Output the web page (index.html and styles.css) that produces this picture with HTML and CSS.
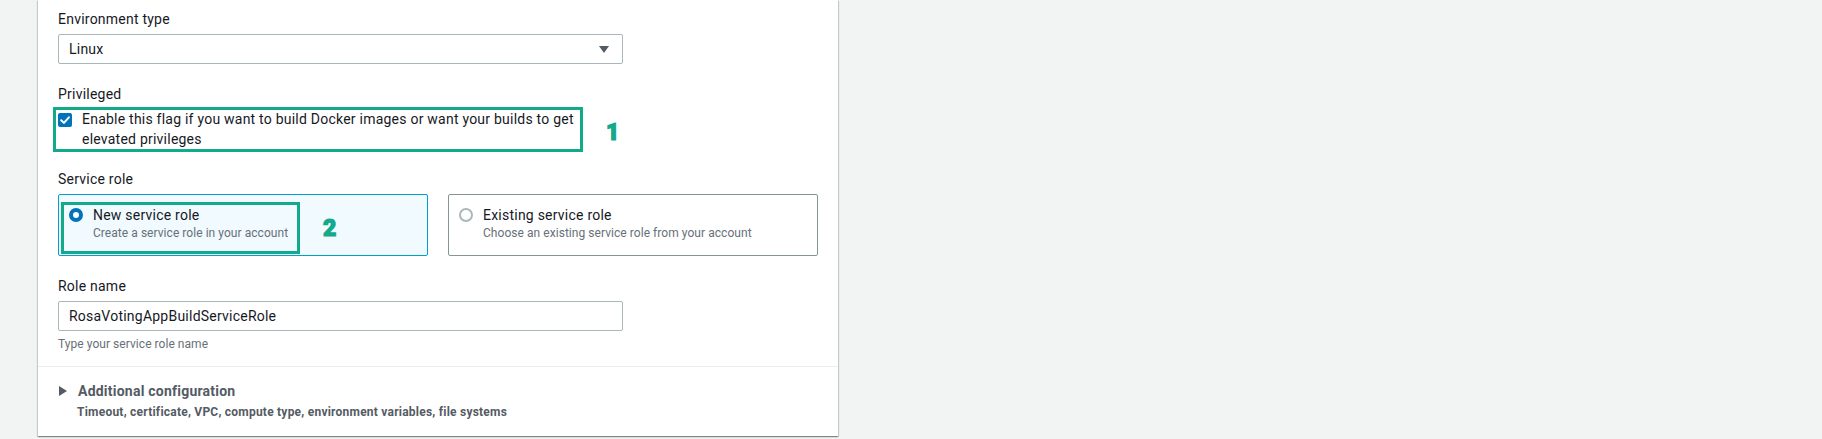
FILE: index.html
```html
<!DOCTYPE html>
<html lang="en">
<head>
<meta charset="utf-8">
<title>Environment</title>
<link rel="stylesheet" href="styles.css">
</head>
<body>
<div class="page">
  <div class="card">
    <div class="section">
      <div class="field">
        <div class="label">Environment type</div>
        <div class="select">
          <span class="value">Linux</span>
          <svg class="caret" width="10" height="7" viewBox="0 0 10 7"><polygon points="0,0 10,0 5,7" fill="#545b64"/></svg>
        </div>
      </div>

      <div class="field">
        <div class="label">Privileged</div>
        <div class="check-row">
          <svg class="checkbox" width="14" height="14" viewBox="0 0 14 14"><rect x="0" y="0" width="14" height="14" rx="2" fill="#0073bb"/><path d="M3.2 7.2 L5.9 9.9 L10.9 4.3" fill="none" stroke="#fff" stroke-width="2" stroke-linecap="round" stroke-linejoin="round"/></svg>
          <span class="check-text">Enable this flag if you want to build Docker images or want your builds to get elevated privileges</span>
          <div class="annot-box annot-box-1"></div>
          <span class="annot-num annot-num-1">1</span>
        </div>
      </div>

      <div class="field">
        <div class="label">Service role</div>
        <div class="tiles">
          <div class="tile tile-selected">
            <span class="radio radio-on"></span>
            <div class="tile-text">
              <div class="tile-title">New service role</div>
              <div class="tile-desc">Create a service role in your account</div>
            </div>
            <div class="annot-box annot-box-2"></div>
            <span class="annot-num annot-num-2">2</span>
          </div>
          <div class="tile">
            <span class="radio"></span>
            <div class="tile-text">
              <div class="tile-title">Existing service role</div>
              <div class="tile-desc">Choose an existing service role from your account</div>
            </div>
          </div>
        </div>
      </div>

      <div class="field">
        <div class="label">Role name</div>
        <div class="input">RosaVotingAppBuildServiceRole</div>
        <div class="hint">Type your service role name</div>
      </div>
    </div>

    <div class="expand">
      <div class="expand-head">
        <svg class="expand-icon" width="8" height="10" viewBox="0 0 8 10"><polygon points="0,0 8,5 0,10" fill="#545b64"/></svg>
        <span class="expand-title">Additional configuration</span>
      </div>
      <div class="expand-desc">Timeout, certificate, VPC, compute type, environment variables, file systems</div>
    </div>
  </div>
</div>
</body>
</html>
```

FILE: styles.css
```css
* { box-sizing: border-box; }

html, body {
  margin: 0;
  padding: 0;
  background: #f2f3f3;
}

body {
  font-family: Roboto, "Liberation Sans", Arial, sans-serif;
  font-size: 14px;
  line-height: 20px;
  letter-spacing: 0.23px;
  color: #16191f;
}

.page {
  height: 439px;
  padding-left: 38px;
}

.card {
  width: 800px;
  background: #fff;
  box-shadow: 0 1px 1px 0 rgba(0, 28, 36, 0.3), 1px 1px 1px 0 rgba(0, 28, 36, 0.15), -1px 1px 1px 0 rgba(0, 28, 36, 0.15);
}

.section {
  padding: 9px 20px 14px;
  border-bottom: 1px solid #eaeded;
  display: flex;
  flex-direction: column;
  gap: 20px;
}

.field {
  display: flex;
  flex-direction: column;
}

.label {
  font-size: 14px;
  line-height: 20px;
  color: #16191f;
  margin-bottom: 5px;
}

.select, .input {
  width: 565px;
  height: 30px;
  border: 1px solid #aab7b8;
  border-radius: 2px;
  padding: 0 13px 0 10px;
  display: flex;
  align-items: center;
  font-size: 14px;
  color: #16191f;
}

.select {
  justify-content: space-between;
}

.check-row {
  position: relative;
  display: flex;
  align-items: flex-start;
  gap: 10px;
}

.checkbox {
  flex: none;
  margin-top: 4px;
}

.check-text {
  max-width: 505px;
}

.annot-box {
  position: absolute;
  border: 3px solid #13a98b;
  pointer-events: none;
}

.annot-box-1 {
  left: -5px;
  top: -2px;
  width: 530px;
  height: 45px;
}

.annot-num {
  position: absolute;
  font-family: Roboto, "Liberation Sans", Arial, sans-serif;
  font-weight: 900;
  font-size: 23px;
  line-height: 23px;
  letter-spacing: 0;
  color: #13a98b;
  -webkit-text-stroke: 1.2px #13a98b;
}

.annot-num-1 {
  left: 548px;
  top: 12px;
}

.tiles {
  display: grid;
  grid-template-columns: 370px 370px;
  gap: 20px;
}

.tile {
  position: relative;
  display: flex;
  align-items: flex-start;
  gap: 10px;
  height: 62px;
  padding: 10px 10px 14px;
  border: 1px solid #879596;
  border-radius: 2px;
  background: #fff;
}

.tile-selected {
  border-color: #00a1c9;
  background: #f1faff;
}

.radio {
  flex: none;
  width: 14px;
  height: 14px;
  margin-top: 3px;
  border-radius: 50%;
  border: 2px solid #aab7b8;
  background: #fff;
}

.radio-on {
  border: 4px solid #0073bb;
}

.tile-title {
  font-size: 14px;
  line-height: 20px;
  color: #16191f;
}

.tile-desc {
  font-size: 12px;
  line-height: 16px;
  letter-spacing: 0.05px;
  color: #687078;
}

.annot-box-2 {
  left: 2px;
  top: 7px;
  width: 239px;
  height: 52px;
}

.annot-num-2 {
  left: 264px;
  top: 22px;
}

.hint {
  margin-top: 5px;
  font-size: 12px;
  line-height: 16px;
  letter-spacing: 0.05px;
  color: #687078;
}

.expand {
  padding: 14px 20px 16px;
}

.expand-head {
  display: flex;
  align-items: center;
  gap: 11px;
  height: 20px;
}

.expand-icon {
  flex: none;
  margin-left: 1px;
}

.expand-title {
  font-size: 14px;
  line-height: 20px;
  font-weight: 700;
  color: #545b64;
}

.expand-desc {
  margin-top: 3px;
  padding-left: 19px;
  font-size: 12px;
  line-height: 16px;
  font-weight: 700;
  color: #545b64;
}
```
